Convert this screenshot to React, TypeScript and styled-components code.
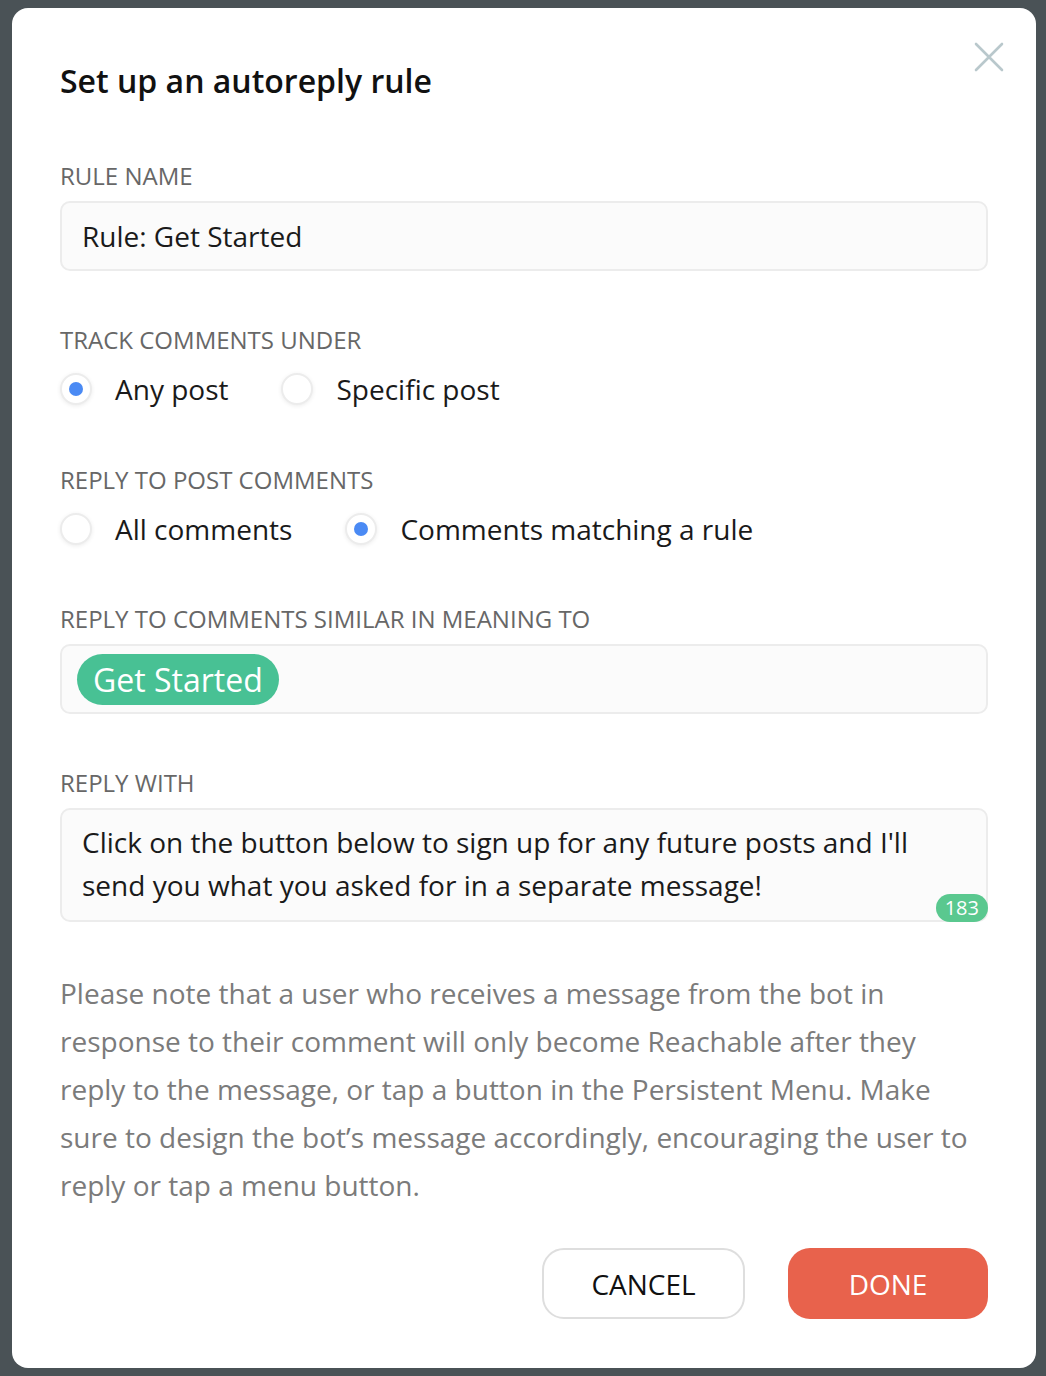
import React, { useState } from "react";
import styled, { createGlobalStyle } from "styled-components";

const Global = createGlobalStyle`
  html, body { margin: 0; padding: 0; }
  body { font-family: "Open Sans", "Noto Sans", "Liberation Sans", sans-serif; }
  * { box-sizing: border-box; }
`;

const Backdrop = styled.div`
  width: 1046px;
  height: 1376px;
  background: #4a5256;
  padding: 8px 10px 8px 12px;
`;

const Modal = styled.div`
  position: relative;
  width: 1024px;
  height: 1360px;
  background: #ffffff;
  border-radius: 16px;
  padding: 53px 48px 49px 48px;
  display: flex;
  flex-direction: column;
`;

const CloseButton = styled.button`
  position: absolute;
  top: 33px;
  right: 31px;
  width: 32px;
  height: 32px;
  padding: 0;
  border: none;
  background: transparent;
  display: flex;
  align-items: center;
  justify-content: center;
  cursor: pointer;
`;

const Title = styled.h1`
  margin: 0;
  font-size: 32px;
  line-height: 40px;
  font-weight: 600;
  color: #111111;
`;

const Section = styled.section<{ $gap: number }>`
  margin-top: ${(p) => p.$gap}px;
  display: flex;
  flex-direction: column;
`;

const Label = styled.div`
  font-size: 24px;
  line-height: 30px;
  color: #676767;
  text-transform: uppercase;
  margin-bottom: 10px;
`;

const Field = styled.div`
  position: relative;
  background: #fbfbfb;
  border: 2px solid #ececec;
  border-radius: 10px;
`;

const InputBox = styled(Field)`
  height: 70px;
  display: flex;
  align-items: center;
  padding: 0 20px;
  font-size: 28px;
  color: #1a1a1a;
`;

const TagBox = styled(Field)`
  height: 70px;
  display: flex;
  align-items: center;
  padding: 0 15px;
`;

const Tag = styled.span`
  display: inline-flex;
  align-items: center;
  height: 51px;
  padding: 0 16px;
  border-radius: 26px;
  background: #48c194;
  color: #ffffff;
  font-size: 32px;
`;

const TextArea = styled(Field)`
  height: 114px;
  padding: 11px 20px 0 20px;
  font-size: 28px;
  line-height: 43px;
  color: #1a1a1a;
`;

const Counter = styled.span`
  position: absolute;
  right: -2px;
  bottom: -2px;
  height: 28px;
  padding: 0 9px;
  border-radius: 14px;
  background: #5ac88f;
  color: #ffffff;
  font-size: 20px;
  line-height: 28px;
`;

const RadioRow = styled.div`
  display: flex;
  align-items: center;
  gap: 53px;
  margin-top: 4px;
  height: 40px;
`;

const RadioOption = styled.label`
  display: flex;
  align-items: center;
  gap: 23px;
  font-size: 28px;
  color: #1a1a1a;
  cursor: pointer;
`;

const RadioCircle = styled.span<{ $checked: boolean }>`
  width: 32px;
  height: 32px;
  border-radius: 50%;
  background: #ffffff;
  border: 2px solid #ececec;
  box-shadow: 0 1px 4px rgba(0, 0, 0, 0.08);
  display: flex;
  align-items: center;
  justify-content: center;
  &::after {
    content: "";
    width: 14px;
    height: 14px;
    border-radius: 50%;
    background: ${(p) => (p.$checked ? "#4a8af4" : "transparent")};
  }
`;

const Note = styled.p`
  margin: 47px 0 0 0;
  font-size: 28px;
  line-height: 48px;
  color: #7b7b7b;
`;

const Footer = styled.div`
  margin-top: 39px;
  display: flex;
  justify-content: flex-end;
  gap: 43px;
`;

const Button = styled.button<{ $primary?: boolean }>`
  height: 71px;
  width: ${(p) => (p.$primary ? 200 : 203)}px;
  border-radius: 22px;
  font-family: inherit;
  font-size: 28px;
  cursor: pointer;
  border: ${(p) => (p.$primary ? "none" : "2px solid #dedede")};
  background: ${(p) => (p.$primary ? "#e8624c" : "#ffffff")};
  color: ${(p) => (p.$primary ? "#ffffff" : "#111111")};
`;

function Radio({ checked, label, onClick }: { checked: boolean; label: string; onClick: () => void }) {
  return (
    <RadioOption onClick={onClick}>
      <RadioCircle $checked={checked} />
      {label}
    </RadioOption>
  );
}

export default function App() {
  const [track, setTrack] = useState("any");
  const [reply, setReply] = useState("rule");
  return (
    <>
      <Global />
      <Backdrop>
        <Modal>
          <CloseButton aria-label="Close">
            <svg width="30" height="30" viewBox="0 0 30 30">
              <path d="M2 2 L28 28 M28 2 L2 28" stroke="#b9c8cc" strokeWidth="2.6" strokeLinecap="round" />
            </svg>
          </CloseButton>
          <Title>Set up an autoreply rule</Title>

          <Section $gap={60}>
            <Label>Rule name</Label>
            <InputBox>Rule: Get Started</InputBox>
          </Section>

          <Section $gap={54}>
            <Label>Track comments under</Label>
            <RadioRow>
              <Radio checked={track === "any"} label="Any post" onClick={() => setTrack("any")} />
              <Radio checked={track === "specific"} label="Specific post" onClick={() => setTrack("specific")} />
            </RadioRow>
          </Section>

          <Section $gap={56}>
            <Label>Reply to post comments</Label>
            <RadioRow>
              <Radio checked={reply === "all"} label="All comments" onClick={() => setReply("all")} />
              <Radio checked={reply === "rule"} label="Comments matching a rule" onClick={() => setReply("rule")} />
            </RadioRow>
          </Section>

          <Section $gap={55}>
            <Label>Reply to comments similar in meaning to</Label>
            <TagBox>
              <Tag>Get Started</Tag>
            </TagBox>
          </Section>

          <Section $gap={54}>
            <Label>Reply with</Label>
            <TextArea>
              Click on the button below to sign up for any future posts and I'll send you what you asked for in a
              separate message!
              <Counter>183</Counter>
            </TextArea>
          </Section>

          <Note>
            Please note that a user who receives a message from the bot in response to their comment will only become
            Reachable after they reply to the message, or tap a button in the Persistent Menu. Make sure to design the
            bot’s message accordingly, encouraging the user to reply or tap a menu button.
          </Note>

          <Footer>
            <Button>CANCEL</Button>
            <Button $primary>DONE</Button>
          </Footer>
        </Modal>
      </Backdrop>
    </>
  );
}
